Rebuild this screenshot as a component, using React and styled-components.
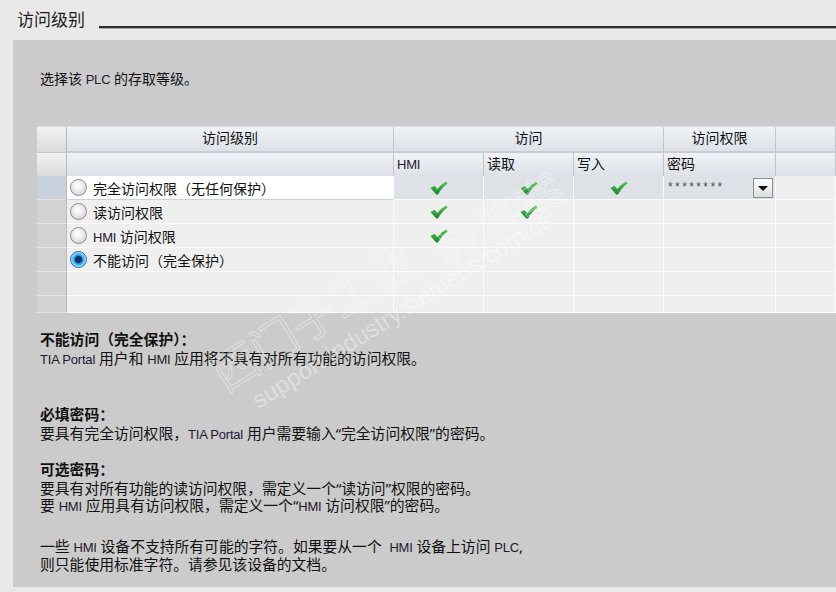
import React from "react";
import styled, { createGlobalStyle } from "styled-components";

const GlobalStyle = createGlobalStyle`
  html, body {
    margin: 0;
    padding: 0;
    background: #e9e9e9;
    overflow: hidden;
  }

  body {
    font-family: "Noto Sans", "Noto Sans CJK SC", sans-serif;
    color: #111;
  }
`;

const Page = styled.div`
  width: 836px;
  height: 592px;
  overflow: hidden;
  position: relative;
`;

const TitleRow = styled.div`
  align-items: flex-end;
  display: flex;
  padding: 10px 0 0 17px;
`;

const Title = styled.div`
  font-size: 17px;
  line-height: 20px;
  color: #1e1e1e;
`;

const Rule = styled.div`
  background: #2e2e2e;
  border-bottom: 1px solid #aaa;
  flex: 1;
  height: 2px;
  margin: 0 0 1px 14px;
`;

const Panel = styled.div`
  background: #cbcbcb;
  box-sizing: border-box;
  height: 547px;
  margin: 10px 0 0 13px;
  padding: 30px 0 0 24px;
  position: relative;
`;

const Text = styled.div`
  font-size: ${(p) => p.$size || 14.8}px;
  line-height: 17px;
  margin-left: 3px;
  white-space: pre;
`;

const Intro = styled(Text)`
  margin-bottom: 38px;
`;

const Table = styled.div`
  background: #efefef;
  border-top: 1px solid #dcdcdc;
`;

const Row = styled.div`
  display: grid;
  grid-template-columns: 30px 327px 90px 90px 90px 112px 1fr;
  height: ${(p) => p.$h}px;
`;

const HeadCell = styled.div`
  background: linear-gradient(#eff2f6, #dde2e8);
  border-bottom: ${(p) => (p.$thick ? "2px solid #c9cdd2" : "1px solid #c2c6cb")};
  border-right: 1px solid #c2c6cb;
  box-sizing: border-box;
  font-size: 14px;
  grid-column: span ${(p) => p.$span || 1};
  line-height: 22px;
  padding: 0 3px;
  text-align: ${(p) => p.$align || "left"};
`;

const Gutter = styled.div`
  background: ${(p) =>
    p.$head
      ? "linear-gradient(#f2f2f2, #dadada)"
      : p.$selected
      ? "#c9d3de"
      : "#d2d2d2"};
  border-bottom: 1px solid ${(p) => (p.$head ? "#c4c4c4" : "#e4e4e4")};
  border-right: 1px solid #b9b9b9;
  box-sizing: border-box;
`;

const Cell = styled.div`
  align-items: center;
  background: ${(p) => (p.$white ? "#ffffff" : p.$selected ? "#dee2e7" : "#efefef")};
  border-bottom: 1px solid ${(p) => (p.$white ? "#c5d3e2" : "#fbfbfb")};
  border-right: 1px solid #fbfbfb;
  box-sizing: border-box;
  display: flex;
  font-size: 14px;
  gap: 6px;
  justify-content: ${(p) => p.$justify || "flex-start"};
  padding: 0 2px;
  position: relative;
  white-space: nowrap;
`;

const Radio = styled.span`
  background: ${(p) =>
    p.$on
      ? "radial-gradient(circle at 50% 50%, #0a2f6a 0 3px, #1f8fe0 4px, #6cc6f4 6px, #b8e4fb 8px)"
      : "radial-gradient(circle at 45% 40%, #ffffff 0, #ececec 45%, #bdbdbd 100%)"};
  border: 1px solid ${(p) => (p.$on ? "#2a6aa8" : "#8c8c8c")};
  border-radius: 50%;
  box-sizing: border-box;
  display: inline-block;
  flex: none;
  height: 17px;
  margin-left: 1px;
  width: 17px;
`;

const Latin = styled.span`
  color: #24182e;
  font-family: "Liberation Sans", sans-serif;
  font-size: 13px;
  letter-spacing: -0.2px;
`;

const Stars = styled.span`
  align-self: flex-start;
  color: #4a4a6a;
  font-family: "Liberation Sans", sans-serif;
  font-size: 12px;
  letter-spacing: 2.4px;
  margin: 4px 0 0 2px;
`;

const DropButton = styled.span`
  align-items: center;
  background: linear-gradient(#ffffff, #dcdcdc);
  border: 1px solid #8f8f8f;
  box-sizing: border-box;
  display: flex;
  height: 20px;
  justify-content: center;
  position: absolute;
  right: 2px;
  top: 2px;
  width: 20px;

  &::after {
    border-left: 5px solid transparent;
    border-right: 5px solid transparent;
    border-top: 5px solid #111;
    content: "";
  }
`;

const Notes = styled.div`
  margin-top: 18px;
`;

const Block = styled.div`
  margin-bottom: ${(p) => p.$gap}px;
`;

const Heading = styled(Text)`
  font-weight: bold;
  margin-bottom: 2px;
`;

const Watermark = styled.div`
  color: ${(p) => (p.$hollow ? "transparent" : "rgba(255, 255, 255, 0.38)")};
  font-family: ${(p) =>
    p.$hollow ? '"Noto Sans CJK SC", sans-serif' : '"Liberation Sans", sans-serif'};
  font-size: ${(p) => p.$size}px;
  left: ${(p) => p.$x}px;
  pointer-events: none;
  position: absolute;
  top: ${(p) => p.$y}px;
  transform: rotate(-32deg);
  transform-origin: left bottom;
  -webkit-text-stroke: ${(p) => (p.$hollow ? "1px rgba(255, 255, 255, 0.4)" : "0")};
  white-space: nowrap;
`;

const Check = () => (
  <svg width="18" height="14" viewBox="0 0 18 14">
    <defs>
      <linearGradient id="ck" x1="0" y1="0" x2="0" y2="1">
        <stop offset="0" stopColor="#52c652" />
        <stop offset="1" stopColor="#1a8428" />
      </linearGradient>
    </defs>
    <path
      d="M0.5 7 L4.5 4.8 L7.2 8 Q11 3.5 16 0.5 L17.5 2.6 Q12 6.5 8 13.5 L6.2 13.5 Z"
      fill="url(#ck)"
    />
  </svg>
);

const levels = [
  { label: ["完全访问权限（无任何保护）"], checks: [true, true, true], pw: true },
  { label: ["读访问权限"], checks: [true, true, false] },
  { label: [<Latin key="h">HMI</Latin>, " 访问权限"], checks: [true, false, false] },
  { label: ["不能访问（完全保护）"], checks: [false, false, false], on: true },
];

const EmptyRow = ({ h }) => (
  <Row $h={h}>
    <Gutter />
    <Cell />
    <Cell />
    <Cell />
    <Cell />
    <Cell />
    <Cell />
  </Row>
);

const App = () => {
  return (
    <Page>
      <GlobalStyle />
      <TitleRow>
        <Title>访问级别</Title>
        <Rule />
      </TitleRow>
      <Panel>
        <Intro $size={14}>
          选择该 <Latin>PLC</Latin> 的存取等级。
        </Intro>

        <Table>
          <Row $h={26}>
            <Gutter $head />
            <HeadCell $thick $align="center">访问级别</HeadCell>
            <HeadCell $thick $span={3} $align="center">访问</HeadCell>
            <HeadCell $thick $align="center">访问权限</HeadCell>
            <HeadCell $thick />
          </Row>
          <Row $h={23}>
            <Gutter $head />
            <HeadCell />
            <HeadCell>
              <Latin>HMI</Latin>
            </HeadCell>
            <HeadCell>读取</HeadCell>
            <HeadCell>写入</HeadCell>
            <HeadCell>密码</HeadCell>
            <HeadCell />
          </Row>
          {levels.map((lv, i) => {
            const sel = i === 0;
            return (
              <Row $h={24} key={i}>
                <Gutter $selected={sel} />
                <Cell $white={sel}>
                  <Radio $on={lv.on} />
                  <span>{lv.label}</span>
                </Cell>
                {lv.checks.map((c, j) => (
                  <Cell key={j} $selected={sel} $justify="center">
                    {c && <Check />}
                  </Cell>
                ))}
                <Cell $selected={sel}>
                  {lv.pw && (
                    <>
                      <Stars>********</Stars>
                      <DropButton />
                    </>
                  )}
                </Cell>
                <Cell />
              </Row>
            );
          })}
          <EmptyRow h={24} />
          <EmptyRow h={17} />
        </Table>

        <Notes>
          <Block $gap={38}>
            <Heading>不能访问（完全保护）：</Heading>
            <Text>
              <Latin>TIA Portal</Latin> 用户和 <Latin>HMI</Latin> 应用将不具有对所有功能的访问权限。
            </Text>
          </Block>
          <Block $gap={18}>
            <Heading>必填密码：</Heading>
            <Text>
              要具有完全访问权限，<Latin>TIA Portal</Latin> 用户需要输入“完全访问权限”的密码。
            </Text>
          </Block>
          <Block $gap={23}>
            <Heading>可选密码：</Heading>
            <Text>要具有对所有功能的读访问权限，需定义一个“读访问”权限的密码。</Text>
            <Text>
              要 <Latin>HMI</Latin> 应用具有访问权限，需定义一个“<Latin>HMI</Latin> 访问权限”的密码。
            </Text>
          </Block>
          <Block $gap={0}>
            <Text>
              一些 <Latin>HMI</Latin> 设备不支持所有可能的字符。如果要从一个{"  "}
              <Latin>HMI</Latin> 设备上访问 <Latin>PLC</Latin>,
            </Text>
            <Text>则只能使用标准字符。请参见该设备的文档。</Text>
          </Block>
        </Notes>
      </Panel>

      <Watermark $hollow $size={46} $x={232} $y={338}>
        西门子工业
      </Watermark>
      <Watermark $hollow $size={46} $x={458} $y={218}>
        找答案
      </Watermark>
      <Watermark $size={24} $x={262} $y={386}>
        support.industry.siemens.com/cs
      </Watermark>
    </Page>
  );
};

export default App;
